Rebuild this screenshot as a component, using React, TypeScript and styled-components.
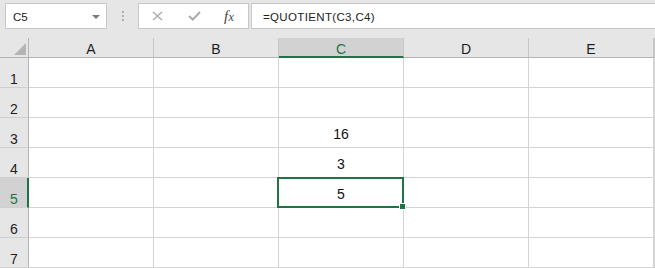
import React from "react";
import styled, { createGlobalStyle, css } from "styled-components";

const GREEN = "#217346";
const GRID = "#d4d4d4";
const HEAD_LINE = "#b4b4b4";

const Global = createGlobalStyle`
  html, body { margin: 0; padding: 0; background: #e6e6e6; }
  * { box-sizing: border-box; }
`;

const Root = styled.div`
  width: 655px;
  height: 268px;
  overflow: hidden;
  background: #e6e6e6;
  font-family: "Liberation Sans", Arial, sans-serif;
  color: #1e1e1e;
`;

const FormulaBar = styled.div`
  height: 38px;
  display: flex;
  align-items: flex-start;
  padding: 3px 0 0 5px;
`;

const Field = styled.div`
  height: 26px;
  background: #ffffff;
  border: 1px solid #c6c6c6;
  display: flex;
  align-items: center;
  font-size: 11.5px;
  color: #222;
`;

const NameBox = styled(Field)`
  width: 102px;
  padding: 1px 6px 0 7px;
  justify-content: space-between;
`;

const Dots = styled.div`
  width: 3px;
  height: 26px;
  margin: 0 13px 0 15px;
  display: flex;
  flex-direction: column;
  justify-content: center;
  gap: 2px;
  & > span {
    width: 2px;
    height: 2px;
    background: #b0b0b0;
  }
`;

const IconBox = styled(Field)`
  width: 111px;
  padding: 0 0 0 13px;
  gap: 0;
`;

const IconSlot = styled.div<{ $w: number }>`
  width: ${(p) => p.$w}px;
  display: flex;
  align-items: center;
`;

const Fx = styled.span`
  font-family: "Liberation Serif", "Times New Roman", serif;
  font-style: italic;
  font-size: 15px;
  color: #444444;
  letter-spacing: 0.2px;
  & > small {
    font-size: 12px;
  }
`;

const FormulaInput = styled(Field)`
  flex: 1;
  margin-left: 2px;
  border-right: none;
  padding: 1px 0 0 11px;
  letter-spacing: 0.35px;
`;

const Grid = styled.div`
  display: grid;
  grid-template-columns: 29px repeat(5, 125px) 1fr;
  grid-template-rows: 20px repeat(7, 30px);
`;

const Corner = styled.div`
  background: #e6e6e6;
  border-right: 1px solid ${HEAD_LINE};
  border-bottom: 1px solid ${HEAD_LINE};
  display: flex;
  justify-content: flex-end;
  align-items: flex-end;
  padding: 0 2px 2px 0;
`;

const ColHeader = styled.div<{ $active?: boolean }>`
  background: #e6e6e6;
  border-right: 1px solid #c6c6c6;
  border-bottom: 1px solid ${HEAD_LINE};
  display: flex;
  justify-content: center;
  align-items: flex-start;
  padding-top: 3px;
  font-size: 14px;
  line-height: 16px;
  color: #1e1e1e;
  ${(p) =>
    p.$active &&
    css`
      background: #d2d2d2;
      border-bottom: 2px solid ${GREEN};
      color: ${GREEN};
    `}
`;

const RowHeader = styled.div<{ $active?: boolean }>`
  background: #e6e6e6;
  border-right: 1px solid ${HEAD_LINE};
  border-bottom: 1px solid #cfcfcf;
  display: flex;
  justify-content: center;
  align-items: flex-end;
  font-size: 14px;
  line-height: 16px;
  color: #1e1e1e;
  ${(p) =>
    p.$active &&
    css`
      background: #d2d2d2;
      border-right: 2px solid ${GREEN};
      color: ${GREEN};
      padding-left: 1px;
    `}
`;

const Cell = styled.div`
  position: relative;
  background: #ffffff;
  border-right: 1px solid ${GRID};
  border-bottom: 1px solid ${GRID};
  display: flex;
  justify-content: center;
  align-items: flex-end;
  padding-bottom: 5px;
  font-size: 14px;
  line-height: 16px;
  color: #111;
`;

const Selection = styled.div`
  position: absolute;
  left: -2px;
  top: -1px;
  right: -1px;
  bottom: -1px;
  border: 2px solid ${GREEN};
  z-index: 2;
  pointer-events: none;
`;

const Handle = styled.div`
  position: absolute;
  right: -4px;
  bottom: -4px;
  width: 7px;
  height: 7px;
  background: ${GREEN};
  border: 1px solid #ffffff;
`;

const columns = ["A", "B", "C", "D", "E"];
const values: Record<string, string> = { C3: "16", C4: "3", C5: "5" };
const active = { col: "C", row: 5 };

export default function App() {
  return (
    <Root>
      <Global />
      <FormulaBar>
        <NameBox>
          <span>C5</span>
          <svg width="8" height="4" viewBox="0 0 8 4">
            <polygon points="0,0 8,0 4,4" fill="#7a7a7a" />
          </svg>
        </NameBox>
        <Dots>
          <span />
          <span />
          <span />
        </Dots>
        <IconBox>
          <IconSlot $w={36}>
            <svg width="11" height="10" viewBox="0 0 11 10">
              <path d="M1 1 L10 9 M10 1 L1 9" stroke="#ababab" strokeWidth="1.4" fill="none" />
            </svg>
          </IconSlot>
          <IconSlot $w={36}>
            <svg width="13" height="10" viewBox="0 0 13 10">
              <path d="M1 5 L4.8 8.6 L12 1" stroke="#ababab" strokeWidth="2" fill="none" />
            </svg>
          </IconSlot>
          <IconSlot $w={20}>
            <Fx>
              f<small>x</small>
            </Fx>
          </IconSlot>
        </IconBox>
        <FormulaInput>=QUOTIENT(C3,C4)</FormulaInput>
      </FormulaBar>
      <Grid>
        <Corner>
          <svg width="12" height="12" viewBox="0 0 12 12">
            <polygon points="12,0 12,12 0,12" fill="#b4b4b4" />
          </svg>
        </Corner>
        {columns.map((c) => (
          <ColHeader key={c} $active={c === active.col}>
            {c}
          </ColHeader>
        ))}
        <ColHeader />
        {[1, 2, 3, 4, 5, 6, 7].map((r) => (
          <React.Fragment key={r}>
            <RowHeader $active={r === active.row}>{r}</RowHeader>
            {columns.map((c) => {
              const id = `${c}${r}`;
              const sel = c === active.col && r === active.row;
              return (
                <Cell key={id}>
                  {values[id] ?? ""}
                  {sel && (
                    <Selection>
                      <Handle />
                    </Selection>
                  )}
                </Cell>
              );
            })}
            <Cell />
          </React.Fragment>
        ))}
      </Grid>
    </Root>
  );
}
